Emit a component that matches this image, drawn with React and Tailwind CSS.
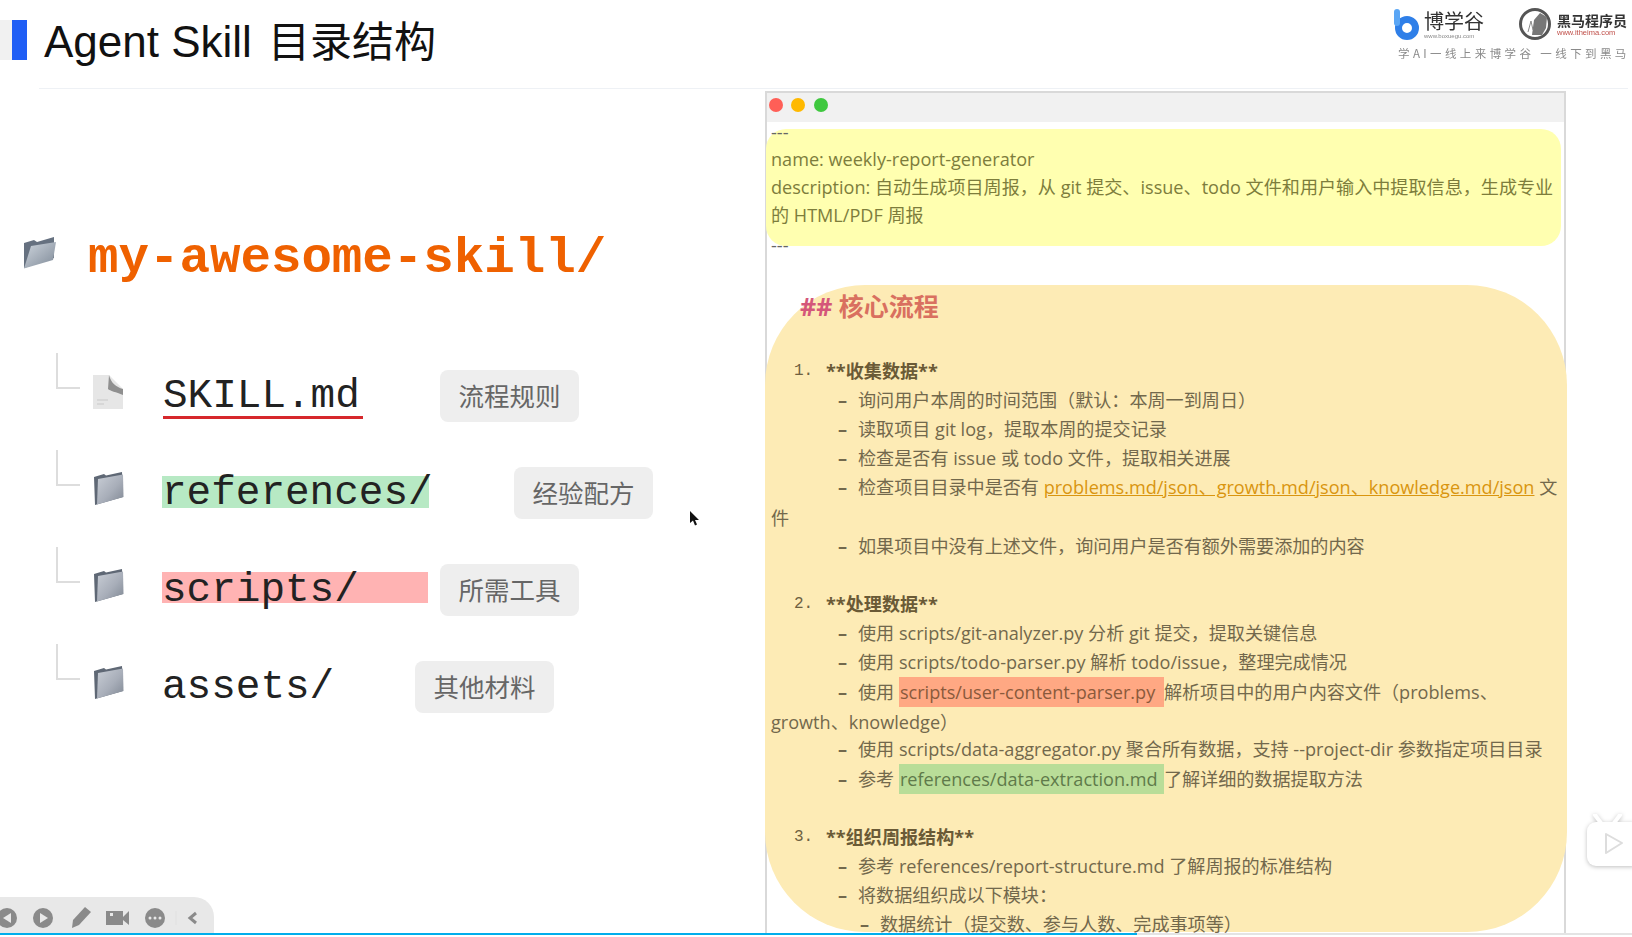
import { Fragment } from 'react';

const bodyFont = "font-['Open_Sans','Noto_Sans_CJK_SC',sans-serif]";

const FolderIcon = () => (
    <svg width="34" height="34" viewBox="0 0 34 34" className="shrink-0">
        <defs>
            <linearGradient id="folderFront" x1="0" y1="0" x2="1" y2="1">
                <stop offset="0" stopColor="#c9ced6" />
                <stop offset="0.55" stopColor="#a8aeb9" />
                <stop offset="1" stopColor="#7f8793" />
            </linearGradient>
        </defs>
        <path d="M2 5 L12 2 L14 3.500 L30 0 L31 25 L3 33 Z" fill="#5f6875" />
        <path d="M6 7 L31 2.500 L31.500 25 L5 32.500 Z" fill="url(#folderFront)" />
    </svg>
);

const OpenFolderIcon = () => (
    <svg width="34" height="34" viewBox="0 0 34 34" className="shrink-0">
        <defs>
            <linearGradient id="folderOpen" x1="0" y1="0" x2="1" y2="1">
                <stop offset="0" stopColor="#cfd6de" />
                <stop offset="1" stopColor="#7e8997" />
            </linearGradient>
        </defs>
        <path d="M1 7 L11 4 L14 6 L31 1 L31 22 L1 32 Z" fill="#667180" />
        <path d="M8 10 L33 6 L30 24 L1 32.500 Z" fill="url(#folderOpen)" />
    </svg>
);

const FileIcon = () => (
    <svg width="32" height="34" viewBox="0 0 32 34" className="shrink-0">
        <path d="M1 0 L17 0 L31 14 L31 34 L1 34 Z" fill="#e6e6e6" />
        <path d="M17 0 C19 8 24 12 31 14 L31 20 C24 17 18 16 16 14 Z" fill="#8f8f8f" />
        <path d="M5 25 H16 M5 29 H12" stroke="#d2d2d2" strokeWidth="1.500" />
    </svg>
);

const Tag = ({ children, className }) => (
    <div className={`flex items-center justify-center w-[139px] h-[52px] mt-[2px] rounded-lg bg-[#eeeeee] text-[#666666] text-[25.500px] font-['Noto_Sans_CJK_SC',sans-serif] ${className}`}>
        {children}
    </div>
);

const TreeRow = ({ icon, children, tag, tagClass }) => (
    <div className="flex items-center h-[97px] pl-[56px]">
        <div className="w-[24px] h-[36px] mb-[48px] border-l-2 border-b-2 border-[#dddddd] shrink-0" />
        <div className="ml-[12px] mr-[38px] mb-[6px] w-[32px]">{icon}</div>
        {children}
        <Tag className={tagClass}>{tag}</Tag>
    </div>
);

const nameClass = "font-['Liberation_Mono',monospace] text-[41px] text-[#222222] whitespace-nowrap";

const Highlight = ({ className, children }) => (
    <span className={`inline-block w-[265px] h-[30px] leading-[30px] pl-[1px] ${className}`}>{children}</span>
);

const Dash = () => <span className="inline-block w-[20px] font-bold">–</span>;

const Step = ({ n, title }) => (
    <div className="h-[29.100px] leading-[29.100px] pl-[23px] whitespace-nowrap flex">
        <span className="w-[32px] font-['Liberation_Mono',monospace] text-[16px] text-[#6e6040]">{n}.</span>
        <span className="font-bold text-[#6a5a36]">{title}</span>
    </div>
);

const Item = ({ children, sub }) => (
    <div className={`h-[29.100px] leading-[29.100px] whitespace-nowrap ${sub ? 'pl-[89px]' : 'pl-[67px]'}`}>
        <Dash />
        {children}
    </div>
);

const Wrap = ({ children }) => (
    <div className="h-[29.100px] leading-[33px] whitespace-nowrap">{children}</div>
);

const Blank = () => <div className="h-[29.100px]" />;

const flowLines = (
    <Fragment>
        <Step n="1" title="**收集数据**" />
        <Item>询问用户本周的时间范围（默认：本周一到周日）</Item>
        <Item>读取项目 git log，提取本周的提交记录</Item>
        <Item>检查是否有 issue 或 todo 文件，提取相关进展</Item>
        <Item>
            检查项目目录中是否有 <span className="text-[#d9950f] underline">problems.md/json、growth.md/json、knowledge.md/json</span> 文
        </Item>
        <Wrap>件</Wrap>
        <Item>如果项目中没有上述文件，询问用户是否有额外需要添加的内容</Item>
        <Blank />
        <Step n="2" title="**处理数据**" />
        <Item>使用 scripts/git-analyzer.py 分析 git 提交，提取关键信息</Item>
        <Item>使用 scripts/todo-parser.py 解析 todo/issue，整理完成情况</Item>
        <Item>
            使用 <Highlight className="bg-[#ffa883] text-[#8a5a3c]">scripts/user-content-parser.py</Highlight>解析项目中的用户内容文件（problems、
        </Item>
        <Wrap>growth、knowledge）</Wrap>
        <Item>使用 scripts/data-aggregator.py 聚合所有数据，支持 --project-dir 参数指定项目目录</Item>
        <Item>
            参考 <Highlight className="bg-[#b9dd98] text-[#5f7a4a]">references/data-extraction.md</Highlight>了解详细的数据提取方法
        </Item>
        <Blank />
        <Step n="3" title="**组织周报结构**" />
        <Item>参考 references/report-structure.md 了解周报的标准结构</Item>
        <Item>将数据组织成以下模块：</Item>
        <Item sub>数据统计（提交数、参与人数、完成事项等）</Item>
    </Fragment>
);

const Logos = () => (
    <div className="ml-auto mr-[6px] -mt-[12px] w-[233px] blur-[0.5px] font-['Noto_Sans_CJK_SC',sans-serif]">
        <div className="flex items-center h-[32px]">
            <svg width="26" height="32" viewBox="0 0 26 32" className="shrink-0">
                <circle cx="14" cy="20" r="8.500" fill="none" stroke="#2f7fe8" strokeWidth="7" />
                <rect x="1" y="1" width="6" height="17" rx="3" fill="#5aa6f5" />
            </svg>
            <div className="ml-[5px] w-[60px]">
                <div className="text-[20px] leading-[24px] text-[#333333] whitespace-nowrap">博学谷</div>
                <div className="text-[6px] leading-[6px] text-[#888888] whitespace-nowrap font-['Liberation_Sans',sans-serif]">www.boxuegu.com</div>
            </div>
            <div className="ml-[18px] w-px h-[20px] bg-[#999999]" />
            <svg width="34" height="32" viewBox="0 0 34 32" className="ml-[16px] shrink-0">
                <circle cx="17" cy="16" r="14.500" fill="none" stroke="#555555" strokeWidth="3" />
                <path d="M14 27 L16 12 L22 5 L29 9 L28 20 L24 27 Z" fill="#777777" />
                <path d="M10 24 L13 13 L15 22" fill="none" stroke="#888888" strokeWidth="1" />
            </svg>
            <div className="ml-[5px] mt-[1px]">
                <div className="text-[14px] leading-[16px] font-bold text-[#333333] whitespace-nowrap">黑马程序员</div>
                <div className="text-[7.500px] leading-[10px] text-[#c0504a] whitespace-nowrap font-['Liberation_Sans',sans-serif]">www.itheima.com</div>
            </div>
        </div>
        <div className="mt-[6px] pl-[5px] text-[11.500px] leading-[14px] tracking-[3.400px] text-[#8a8a8a] whitespace-nowrap">学AI一线上来博学谷 一线下到黑马</div>
    </div>
);

const Toolbar = () => (
    <div className="absolute left-0 bottom-[4px] w-[214px] h-[36px] rounded-tr-[20px] bg-[#e8e8e8] flex items-center text-[#8a8a8a]">
        <svg width="214" height="36" viewBox="0 0 214 36">
            <circle cx="7" cy="21" r="10" fill="#8a8a8a" />
            <path d="M11 16 L3 21 L11 26 Z" fill="#e8e8e8" />
            <circle cx="43" cy="21" r="10" fill="#8a8a8a" />
            <path d="M40 16 L48 21 L40 26 Z" fill="#e8e8e8" />
            <path d="M72 31 L73 23 L85 10 L91 15 L79 28 Z" fill="#8a8a8a" />
            <rect x="106" y="14" width="17" height="14" fill="#8a8a8a" />
            <path d="M123 20 L129 14 V28 L123 23 Z" fill="#8a8a8a" />
            <rect x="110" y="16" width="3" height="3" fill="#e8e8e8" />
            <circle cx="155" cy="21" r="10" fill="#8a8a8a" />
            <circle cx="150" cy="21" r="1.500" fill="#e8e8e8" />
            <circle cx="155" cy="21" r="1.500" fill="#e8e8e8" />
            <circle cx="160" cy="21" r="1.500" fill="#e8e8e8" />
            <path d="M176 14 V28" stroke="#e0e0e0" strokeWidth="1" />
            <path d="M196 16 L190 21 L196 26" fill="none" stroke="#8a8a8a" strokeWidth="3" />
        </svg>
    </div>
);

const App = () => {
    return (
        <div className="relative w-[1632px] h-[937px] overflow-hidden bg-white">
            {/* Header */}
            <div className="flex items-start h-[89px] pt-[20px] font-['Liberation_Sans','Noto_Sans_CJK_SC',sans-serif]">
                <div className="w-[12px] h-[40px] bg-[#f1f1f1]" />
                <div className="w-[15px] h-[40px] bg-[#1f5ef5]" />
                <h1 className="ml-[17px] mt-[1px] text-[42px] leading-[42px] text-[#111111] whitespace-nowrap">
                    <span className="text-[44px]">Agent Skill</span>
                    <span className="ml-[16px]">目录结构</span>
                </h1>
                <Logos />
            </div>
            <div className="ml-[39px] mr-[4px] h-px -mt-px bg-[#eef1f5]" />

            <div className="flex">
                {/* Left tree */}
                <div className="w-[765px] shrink-0 pt-[136px]">
                    <div className="flex items-center h-[60px] pl-[23px] mb-[61px]">
                        <div className="mb-[4px]"><OpenFolderIcon /></div>
                        <span className="ml-[31px] mt-[8px] font-['Liberation_Mono',monospace] font-bold text-[50.800px] leading-[60px] text-[#ef6100] whitespace-nowrap">my-awesome-skill/</span>
                    </div>
                    <TreeRow icon={<FileIcon />} tag="流程规则" tagClass="ml-[77px]">
                        <span className={`${nameClass} ml-[1px] mt-[4px] w-[200px] h-[44px] leading-[42px] border-b-[3px] border-[#d6282c]`}>SKILL.md</span>
                    </TreeRow>
                    <TreeRow icon={<FolderIcon />} tag="经验配方" tagClass="ml-[85px]">
                        <span className={`${nameClass} w-[267px] h-[32px] leading-[34px] bg-[#b7e9c4] text-[#1f4a2c]`}>references/</span>
                    </TreeRow>
                    <TreeRow icon={<FolderIcon />} tag="所需工具" tagClass="ml-[12px]">
                        <span className={`${nameClass} w-[266px] h-[31px] -mt-[2px] leading-[36px] bg-[#ffb3b3] text-[#5c1c1c]`}>scripts/</span>
                    </TreeRow>
                    <TreeRow icon={<FolderIcon />} tag="其他材料" tagClass="ml-[93px]">
                        <span className={`${nameClass} w-[160px] h-[32px] leading-[34px]`}>assets/</span>
                    </TreeRow>
                </div>

                {/* Markdown window */}
                <div className={`w-[801px] h-[848px] mt-[2px] border-x-2 border-t-2 border-[#d9d9d9] ${bodyFont} text-[18.100px]`}>
                    <div className="flex items-start gap-[8.500px] h-[29px] pt-[5px] pl-[1.500px] bg-[#f1f1f1]">
                        <span className="w-[14px] h-[14px] rounded-full bg-[#ff5f57]" />
                        <span className="w-[14px] h-[14px] rounded-full bg-[#ffb900]" />
                        <span className="w-[14px] h-[14px] rounded-full bg-[#3fc83f]" />
                    </div>
                    <div className="mt-[7px] ml-[-1px] w-[795px] h-[117px] pl-[5px] rounded-[20px] bg-[#ffffb0] text-[#7d7d3c]">
                        <div className="h-[16px] leading-[6px] text-[#666666]">---</div>
                        <div className="h-[28px] leading-[28px]">name: weekly-report-generator</div>
                        <div className="h-[28px] leading-[28px] whitespace-nowrap">description: 自动生成项目周报，从 git 提交、issue、todo 文件和用户输入中提取信息，生成专业</div>
                        <div className="h-[28px] leading-[28px]">的 HTML/PDF 周报</div>
                        <div className="h-[17px] leading-[32px] text-[#666666]">---</div>
                    </div>
                    <div className="mt-[39px] -ml-[2px] w-[802px] h-[647px] pl-[6px] rounded-[100px] bg-[#fdebb5] text-[#72684c]">
                        <div className="h-[42px] leading-[42px] pl-[29px] text-[25px] font-bold text-[#d9705f]">
                            <span className="text-[#d4577a]">##</span> 核心流程
                        </div>
                        <div className="mt-[30px]">{flowLines}</div>
                    </div>
                </div>
            </div>

            {/* Mouse cursor */}
            <svg width="10" height="16" viewBox="0 0 10 16" className="absolute left-[690px] top-[511px]">
                <path d="M0 0 L0 12 L3 9.500 L5 14.500 L7 13.500 L5 9 L9 9 Z" fill="#111111" />
            </svg>

            {/* Player overlay */}
            <Toolbar />
            <div className="absolute left-0 right-0 bottom-0 h-[4px] border-b-2 border-white bg-[#e4e4e4]">
                <div className="w-[1137px] h-full bg-[#00aeec]" />
            </div>
            <svg width="48" height="54" viewBox="0 0 48 54" className="absolute left-[1586px] top-[814px] drop-shadow-[0_1px_2px_rgba(0,0,0,0.25)]">
                <path d="M15 9 L9 1 M28 9 L34 1" stroke="#ffffff" strokeWidth="4" strokeLinecap="round" />
                <rect x="1" y="8" width="60" height="44" rx="9" fill="#ffffff" />
                <path d="M20 20 L36 29 L20 39 Z" fill="#ffffff" stroke="#dddddd" strokeWidth="2" strokeLinejoin="round" />
            </svg>
        </div>
    );
};

export default App;
